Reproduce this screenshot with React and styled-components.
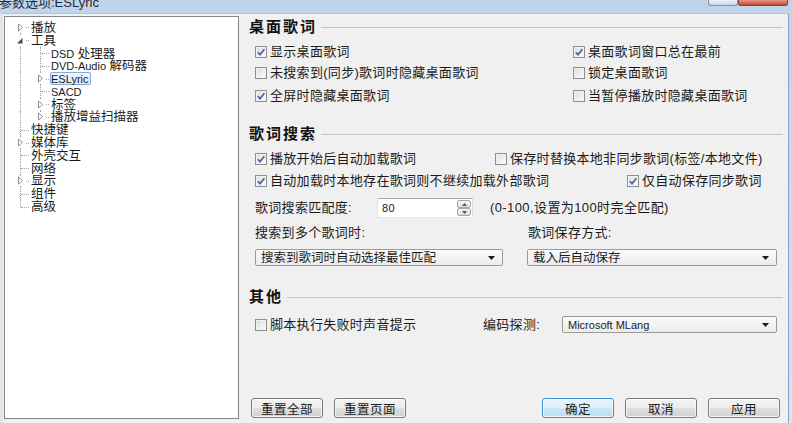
import React from 'react';
import styled, { createGlobalStyle, css } from 'styled-components';

const GlobalStyle = createGlobalStyle`
  html, body {
    margin: 0;
    padding: 0;
  }
  body {
    font-family: "Liberation Sans", "Noto Sans CJK SC", sans-serif;
    font-size: 13px;
    color: #1b1b1b;
  }
  * {
    box-sizing: border-box;
  }
`;

const Window = styled.div`
  width: 792px;
  height: 423px;
  display: flex;
  flex-direction: column;
  overflow: hidden;
  background: linear-gradient(180deg, #bfd3ea 0%, #d6e4f3 100%);
`;

const TitleBar = styled.div`
  height: 13px;
  flex: none;
  display: flex;
  align-items: flex-start;
  overflow: hidden;
`;

const Title = styled.div`
  flex: 1;
  margin-top: -5px;
  margin-left: -1px;
  font-size: 13px;
  line-height: 16px;
  color: #1e2a38;
`;

const CaptionButtons = styled.div`
  display: flex;
  margin-right: 4px;
`;

const CaptionButton = styled.div`
  width: ${p => p.$w}px;
  height: 6px;
  border: 1px solid ${p => (p.$close ? '#8c3b2b' : '#7f91a8')};
  border-top: none;
  border-radius: 0 0 3px 3px;
  background: ${p =>
    p.$close ? 'linear-gradient(#e39a86, #c9482f)' : 'linear-gradient(#eef3f9, #c9d6e5)'};
`;

const Body = styled.div`
  flex: 1;
  display: flex;
  margin-right: 3px;
  padding: 2px 0 4px 1px;
  background: #f0f0f0;
  border-top: 1px solid #b3c3d5;
  border-left: 3px solid #e7e3dd;
  border-right: 1px solid #89a3c2;
`;

/* ---------- tree ---------- */

const Tree = styled.div`
  width: 235px;
  flex: none;
  background: #fff;
  border: 1px solid #828790;
  padding: 4px 0 0 5px;
  font-size: 12.5px;
`;

const TreeRow = styled.div`
  display: flex;
  align-items: center;
  height: 12.8px;
  white-space: nowrap;
`;

const Guide = styled.span`
  position: relative;
  flex: none;
  width: 20px;
  height: 100%;
  display: flex;
  align-items: center;
  justify-content: center;

  &::before {
    content: '';
    display: ${p => (p.$line ? 'block' : 'none')};
    position: absolute;
    left: 10px;
    top: ${p => (p.$line === 'first' ? '50%' : '0')};
    bottom: ${p => (p.$line === 'last' ? '50%' : '0')};
    border-left: 1px dotted #a3a3a3;
  }
  &::after {
    content: '';
    display: ${p => (p.$stub ? 'block' : 'none')};
    position: absolute;
    left: 11px;
    width: 8px;
    top: 50%;
    border-top: 1px dotted #a3a3a3;
  }
`;

const ExpanderIcon = styled.svg`
  position: relative;
  z-index: 1;
  background: #fff;
`;

const NodeLabel = styled.span`
  display: inline-block;
  height: 13px;
  padding: 0 1px 0 0;
  border: 1px solid transparent;
  border-radius: 2px;
  line-height: 12px;
  ${p =>
    p.$selected &&
    css`
      border-color: #84acdd;
      background: linear-gradient(#f3f8fe, #d9e9fc);
    `}
`;

const Latin = styled.span`
  font-size: ${p => p.$size || 11}px;
`;

function Expander({ open }) {
  return (
    <ExpanderIcon width="10" height="9" viewBox="0 0 10 9">
      {open ? (
        <polygon points="7.5,2 7.5,7.5 2,7.5" fill="#4a4a4a" />
      ) : (
        <polygon points="3.5,1 7.5,4.5 3.5,8" fill="#fff" stroke="#8f8f8f" strokeWidth="1" />
      )}
    </ExpanderIcon>
  );
}

const pipe = { line: 'pipe' };
const mid = { line: 'mid', stub: true };
const midClosed = { line: 'mid', stub: true, expander: 'closed' };
const last = { line: 'last', stub: true };

const treeRows = [
  { label: '播放', guides: [{ line: 'first', stub: true, expander: 'closed' }] },
  { label: '工具', guides: [{ line: 'mid', stub: true, expander: 'open' }] },
  { label: <><Latin>DSD</Latin> 处理器</>, guides: [pipe, mid] },
  { label: <><Latin>DVD-Audio</Latin> 解码器</>, guides: [pipe, mid] },
  { label: <Latin>ESLyric</Latin>, guides: [pipe, midClosed], selected: true },
  { label: <Latin>SACD</Latin>, guides: [pipe, mid] },
  { label: '标签', guides: [pipe, midClosed] },
  { label: '播放增益扫描器', guides: [pipe, { ...last, expander: 'closed' }] },
  { label: '快捷键', guides: [mid] },
  { label: '媒体库', guides: [midClosed] },
  { label: '外壳交互', guides: [mid] },
  { label: '网络', guides: [mid] },
  { label: '显示', guides: [midClosed] },
  { label: '组件', guides: [mid] },
  { label: '高级', guides: [last] },
];

/* ---------- settings panel ---------- */

const Panel = styled.div`
  flex: 1;
  display: flex;
  flex-direction: column;
  padding: 0 5px 0 10px;
  font-size: 13px;
  letter-spacing: 0.3px;
`;

const SectionHead = styled.div`
  flex: none;
  display: flex;
  align-items: center;
  height: 16px;
  margin-top: ${p => p.$mt}px;
  font-size: 15px;
  font-weight: bold;
  letter-spacing: 2px;
  line-height: 16px;
  color: #111;

  &::after {
    content: '';
    flex: 1;
    height: 1px;
    margin-left: 4px;
    background: #c6c6c6;
  }
`;

const Row = styled.div`
  flex: none;
  display: flex;
  align-items: center;
  height: ${p => p.$h || 16}px;
  margin-top: ${p => p.$mt}px;
  padding-left: 6px;
  white-space: nowrap;
  line-height: 16px;
`;

const Cell = styled.div`
  flex: none;
  display: flex;
  align-items: center;
  width: ${p => (p.$w ? `${p.$w}px` : 'auto')};
`;

const CheckLabel = styled.label`
  display: flex;
  align-items: center;
  gap: 3px;
`;

const Box = styled.span`
  width: 12px;
  height: 12px;
  flex: none;
  display: flex;
  align-items: center;
  justify-content: center;
  border: 1px solid #8e8f8f;
  background: linear-gradient(135deg, #d9dadb 0%, #f4f4f4 70%, #fbfbfb 100%);
  box-shadow: inset 0 0 0 1px #f2f2f2;
`;

function Check({ checked, children }) {
  return (
    <CheckLabel>
      <Box>
        {checked && (
          <svg width="10" height="10" viewBox="0 0 10 10">
            <path d="M1.8 5.2 L4 7.6 L8.4 2.2" fill="none" stroke="#4866a6" strokeWidth="1.7" />
          </svg>
        )}
      </Box>
      <span>{children}</span>
    </CheckLabel>
  );
}

const SpinBox = styled.div`
  display: flex;
  width: 96px;
  height: 20px;
  background: #fff;
  border: 1px solid;
  border-color: #abadb3 #dbdfe6 #e3e9ef #e2e3ea;
`;

const SpinValue = styled.div`
  flex: 1;
  padding-left: 4px;
  font-size: 11px;
  line-height: 18px;
`;

const SpinButtons = styled.div`
  width: 16px;
  display: flex;
  flex-direction: column;
  padding: 1px;
`;

const SpinButton = styled.div`
  flex: 1;
  display: flex;
  align-items: center;
  justify-content: center;
  border: 1px solid #a3a8b0;
  border-radius: 2px;
  background: linear-gradient(#f7f7f7, #dedede);
`;

const Hint = styled.span`
  margin-left: 17px;
  letter-spacing: 0.4px;
`;

const Combo = styled.div`
  width: ${p => p.$w}px;
  height: 17px;
  display: flex;
  align-items: center;
  justify-content: space-between;
  padding: 0 7px 0 5px;
  border: 1px solid #9a9a9a;
  border-radius: 2px;
  background: linear-gradient(#fbfbfb, #ebebeb);
  font-size: ${p => (p.$latin ? 11 : 12.5)}px;
  letter-spacing: 0;
`;

function Arrow() {
  return (
    <svg width="7" height="4" viewBox="0 0 7 4">
      <polygon points="0,0 7,0 3.5,4" fill="#1a1a1a" />
    </svg>
  );
}

const ButtonRow = styled.div`
  flex: none;
  display: flex;
  gap: 11px;
  margin-top: auto;
  margin-bottom: 1px;
  padding: 0 3px 0 2px;
`;

const Button = styled.div`
  width: 72px;
  height: 20px;
  display: flex;
  align-items: center;
  justify-content: center;
  margin-left: ${p => (p.$push ? 'auto' : '0')};
  border: 1px solid ${p => (p.$primary ? '#3d8fcc' : '#7a7a7a')};
  border-radius: 3px;
  background: ${p =>
    p.$primary
      ? 'linear-gradient(#e9f4fc 0%, #dbeefb 50%, #c9e5f9 51%, #bcdff7 100%)'
      : 'linear-gradient(#f4f4f4 0%, #ececec 50%, #dedede 51%, #d2d2d2 100%)'};
  box-shadow: inset 0 0 0 1px rgba(255, 255, 255, 0.7);
  font-size: 12.5px;
  letter-spacing: 0.5px;
`;

export default function App() {
  return (
    <Window>
      <GlobalStyle />
      <TitleBar>
        <Title>参数选项:ESLyric</Title>
        <CaptionButtons>
          <CaptionButton $w={30} />
          <CaptionButton $w={50} $close />
        </CaptionButtons>
      </TitleBar>
      <Body>
        <Tree>
          {treeRows.map((row, i) => (
            <TreeRow key={i}>
              {row.guides.map((g, j) => (
                <Guide key={j} $line={g.line} $stub={g.stub}>
                  {g.expander && <Expander open={g.expander === 'open'} />}
                </Guide>
              ))}
              <NodeLabel $selected={row.selected}>{row.label}</NodeLabel>
            </TreeRow>
          ))}
        </Tree>

        <Panel>
          <SectionHead $mt={3}>桌面歌词</SectionHead>
          <Row $mt={9}>
            <Cell $w={318}><Check checked>显示桌面歌词</Check></Cell>
            <Cell><Check checked>桌面歌词窗口总在最前</Check></Cell>
          </Row>
          <Row $mt={5}>
            <Cell $w={318}><Check>未搜索到(同步)歌词时隐藏桌面歌词</Check></Cell>
            <Cell><Check>锁定桌面歌词</Check></Cell>
          </Row>
          <Row $mt={7}>
            <Cell $w={318}><Check checked>全屏时隐藏桌面歌词</Check></Cell>
            <Cell><Check>当暂停播放时隐藏桌面歌词</Check></Cell>
          </Row>

          <SectionHead $mt={22}>歌词搜索</SectionHead>
          <Row $mt={9}>
            <Cell $w={240}><Check checked>播放开始后自动加载歌词</Check></Cell>
            <Cell><Check>保存时替换本地非同步歌词(标签/本地文件)</Check></Cell>
          </Row>
          <Row $mt={6}>
            <Cell $w={372}><Check checked>自动加载时本地存在歌词则不继续加载外部歌词</Check></Cell>
            <Cell><Check checked>仅自动保存同步歌词</Check></Cell>
          </Row>
          <Row $mt={9} $h={20}>
            <Cell $w={122}>歌词搜索匹配度:</Cell>
            <SpinBox>
              <SpinValue>80</SpinValue>
              <SpinButtons>
                <SpinButton>
                  <svg width="5" height="3" viewBox="0 0 5 3"><polygon points="0,3 5,3 2.5,0" fill="#555" /></svg>
                </SpinButton>
                <SpinButton>
                  <svg width="5" height="3" viewBox="0 0 5 3"><polygon points="0,0 5,0 2.5,3" fill="#555" /></svg>
                </SpinButton>
              </SpinButtons>
            </SpinBox>
            <Hint>(0-100,设置为100时完全匹配)</Hint>
          </Row>
          <Row $mt={7}>
            <Cell $w={273}>搜索到多个歌词时:</Cell>
            <Cell>歌词保存方式:</Cell>
          </Row>
          <Row $mt={8} $h={17}>
            <Cell $w={272}>
              <Combo $w={248}>搜索到歌词时自动选择最佳匹配<Arrow /></Combo>
            </Cell>
            <Combo $w={250}>载入后自动保存<Arrow /></Combo>
          </Row>

          <SectionHead $mt={23}>其他</SectionHead>
          <Row $mt={11} $h={17}>
            <Cell $w={228}><Check>脚本执行失败时声音提示</Check></Cell>
            <Cell $w={79}>编码探测:</Cell>
            <Combo $w={215} $latin>Microsoft MLang<Arrow /></Combo>
          </Row>

          <ButtonRow>
            <Button>重置全部</Button>
            <Button>重置页面</Button>
            <Button $primary $push>确定</Button>
            <Button>取消</Button>
            <Button>应用</Button>
          </ButtonRow>
        </Panel>
      </Body>
    </Window>
  );
}
